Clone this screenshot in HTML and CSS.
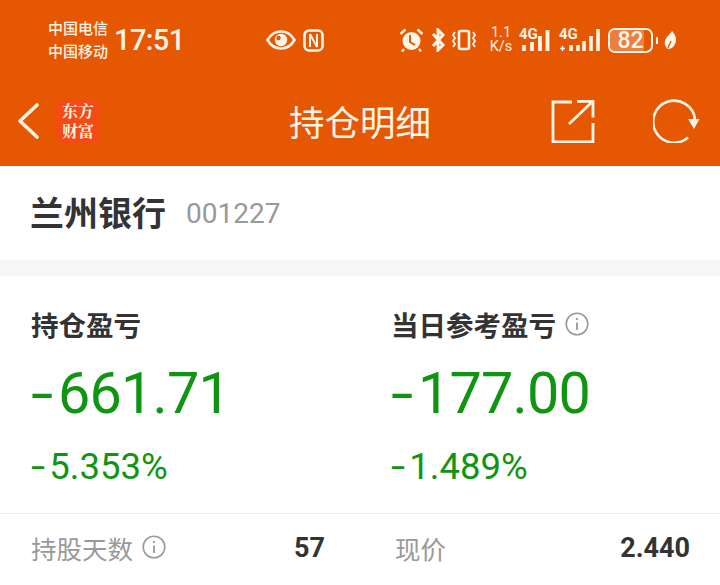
FILE: index.html
```html
<!DOCTYPE html>
<html lang="zh">
<head>
<meta charset="utf-8">
<title>持仓明细</title>
<link rel="stylesheet" href="styles.css">
</head>
<body>
<header class="top">
  <div class="status">
    <div class="carriers"><span>中国电信</span><span>中国移动</span></div>
    <span class="clock">17:51</span>
    <svg class="ic-eye" width="30" height="20" viewBox="0 0 30 20"><path d="M1.500 10C5 4 10 1.500 15 1.500S25 4 28.500 10C25 16 20 18.500 15 18.500S5 16 1.500 10z" fill="none" stroke="#fff4e8" stroke-width="2.600"/><circle cx="15" cy="10" r="6.200" fill="#fff4e8"/><circle cx="12.500" cy="8" r="2.200" fill="#e55700"/></svg>
    <svg class="ic-nfc" width="21" height="23" viewBox="0 0 21 23"><rect x="1.500" y="1.500" width="18" height="20" rx="4.500" fill="none" stroke="#fff4e8" stroke-width="2.600"/><path d="M7 5v13M14 5v13" fill="none" stroke="#fff4e8" stroke-width="2"/><path d="M7 5l7 13" fill="none" stroke="#fff4e8" stroke-width="2"/></svg>
    <span class="status-gap"></span>
    <svg class="ic-alarm" width="25" height="24" viewBox="0 0 25 24"><circle cx="12.500" cy="13" r="9" fill="#fff4e8"/><path d="M11 7v7l5 3" fill="none" stroke="#e55700" stroke-width="2"/><path d="M1.500 6l5-4.500M23.500 6l-5-4.500M5 21l-2 2.500M20 21l2 2.500" stroke="#fff4e8" stroke-width="2.400" fill="none"/></svg>
    <svg class="ic-bt" width="14" height="24" viewBox="0 0 14 24"><path d="M2 6l10 11-5 5V2l5 5L2 18" fill="none" stroke="#fff4e8" stroke-width="3"/></svg>
    <svg class="ic-vib" width="26" height="22" viewBox="0 0 26 22"><rect x="8" y="2" width="10" height="18" rx="2" fill="none" stroke="#fff4e8" stroke-width="2.600"/><path d="M4 3l-2 3 2 3-2 3 2 3-2 3M22 3l2 3-2 3 2 3-2 3 2 3" fill="none" stroke="#fff4e8" stroke-width="1.800"/></svg>
    <div class="speed"><span>1.1</span><span>K/s</span></div>
    <div class="signal">
      <span class="net">4G</span>
      <svg width="29" height="23" viewBox="0 0 29 23"><path d="M2 22v-6M10 22v-9M18 22V7M25.500 22V1" stroke="#fff4e8" stroke-width="3.800" fill="none"/></svg>
    </div>
    <div class="signal two">
      <span class="net">4G</span>
      <svg width="42" height="24" viewBox="0 0 42 24"><path d="M1 20.500h5M3.500 18v5" stroke="#fff4e8" stroke-width="1.400" fill="none"/><path d="M12 23v-6M19 23v-6M25 23v-10M32 23V8M39 23V1" stroke="#fff4e8" stroke-width="3.600" fill="none"/></svg>
    </div>
    <div class="battery"><span class="level"></span><span class="pct">82</span></div>
    <span class="nub"></span>
    <svg class="ic-leaf" width="13" height="20" viewBox="0 0 13 20"><path d="M8 1c4 4 5 9 3 13-1 3-4 5-7 5-2-1-4-5-3-8 1-4 5-7 7-10z" fill="#fff4e8"/><path d="M4 18l3-7" stroke="#e55700" stroke-width="1.200"/></svg>
  </div>
  <nav class="nav">
    <div class="nav-left">
      <svg class="back" width="24" height="38" viewBox="0 0 24 38"><path d="M21 3L4 19l17 16" fill="none" stroke="#fff4e8" stroke-width="3.600" stroke-linecap="round" stroke-linejoin="round"/></svg>
      <div class="logo"><span>东方</span><span>财富</span></div>
    </div>
    <h1 class="title">持仓明细</h1>
    <div class="nav-right">
      <svg width="44" height="44" viewBox="0 0 44 44"><path d="M21 3H2v40h40V24" fill="none" stroke="#fff4e8" stroke-width="2.800"/><path d="M18 25L40 4M26 2.400h16v16" fill="none" stroke="#fff4e8" stroke-width="2.800"/></svg>
      <svg width="48" height="44" viewBox="0 0 48 44"><path d="M35 38.500A21 21 0 1 1 42 20" fill="none" stroke="#fff4e8" stroke-width="2.600"/><path d="M35 20h11.500l-5.500 10z" fill="#fff4e8"/></svg>
    </div>
  </nav>
</header>
<section class="stock">
  <strong class="stock-name">兰州银行</strong>
  <span class="stock-code">001227</span>
</section>
<main class="panel">
  <div class="profit">
    <div class="profit-col">
      <h2 class="label">持仓盈亏</h2>
      <div class="amount"><span class="minus">-</span>661.71</div>
      <div class="ratio"><span class="minus">-</span>5.353%</div>
    </div>
    <div class="profit-col">
      <h2 class="label">当日参考盈亏 <svg class="info" width="24" height="24" viewBox="0 0 24 24"><circle cx="12" cy="12" r="10.800" fill="none" stroke="#9a9a9a" stroke-width="1.600"/><path d="M12 10.500V18M12 6v2" stroke="#9a9a9a" stroke-width="1.800" fill="none"/></svg></h2>
      <div class="amount"><span class="minus">-</span>177.00</div>
      <div class="ratio"><span class="minus">-</span>1.489%</div>
    </div>
  </div>
  <div class="facts">
    <div class="fact first">
      <span class="fact-name">持股天数 <svg class="info" width="24" height="24" viewBox="0 0 24 24"><circle cx="12" cy="12" r="10.800" fill="none" stroke="#9a9a9a" stroke-width="1.600"/><path d="M12 10.500V18M12 6v2" stroke="#9a9a9a" stroke-width="1.800" fill="none"/></svg></span>
      <span class="fact-value">57</span>
    </div>
    <div class="fact second">
      <span class="fact-name">现价</span>
      <span class="fact-value">2.440</span>
    </div>
  </div>
</main>
</body>
</html>
```

FILE: styles.css
```css
* { box-sizing: border-box; }
html, body { margin: 0; padding: 0; }
body {
  width: 720px;
  height: 585px;
  overflow: hidden;
  background: #fff;
  font-family: "Noto Sans CJK SC", Roboto, sans-serif;
}
.top { height: 166px; background: #e55700; color: #fff4e8; display: flex; flex-direction: column; }
.status { height: 80px; display: flex; align-items: center; padding-left: 48px; }
.carriers { display: flex; flex-direction: column; font-size: 15px; line-height: 23px; width: 66px; margin-top: -3px; font-weight: 500; }
.clock { font-family: Roboto, sans-serif; font-size: 29px; font-weight: 500; letter-spacing: -0.600px; width: 152px; }
.ic-eye { margin-right: 7px; }
.status-gap { width: 75px; }
.ic-alarm { margin-right: 7px; }
.ic-bt { margin-right: 6px; }
.ic-vib { margin-right: 12px; }
.speed { display: flex; flex-direction: column; align-items: center; font-family: Roboto, sans-serif; font-size: 14.500px; line-height: 14px; width: 24px; margin-right: 6px; }
.signal { position: relative; display: flex; align-items: flex-end; margin-right: 8px; height: 24px; padding-left: 3px; }
.signal.two { padding-left: 0; margin-right: 7px; }
.net { position: absolute; left: 0; top: -3px; font-family: Roboto, sans-serif; font-size: 15px; font-weight: 700; }
.battery { position: relative; width: 45px; height: 25px; border: 2px solid #fff4e8; border-radius: 7px; display: flex; align-items: center; justify-content: center; overflow: hidden; }
.level { position: absolute; left: 0; top: 0; bottom: 0; width: 82%; background: #ec7f3f; }
.pct { position: relative; font-family: Roboto, sans-serif; font-size: 23px; font-weight: 500; }
.nub { width: 2px; height: 7px; background: #fff4e8; margin: 0 6px 0 3px; }
.nav { flex: 1; display: flex; align-items: center; justify-content: space-between; position: relative; padding: 0 19px 4px 16px; }
.nav-left { display: flex; align-items: center; gap: 16px; }
.logo { width: 44px; height: 44px; background: #f44a14; border-radius: 7px; display: flex; flex-direction: column; align-items: center; justify-content: center; font-family: "Noto Serif CJK SC", "Noto Sans CJK SC", sans-serif; font-weight: 700; font-size: 16px; line-height: 20px; }
.title { position: absolute; left: 289px; top: 16px; margin: 0; font-size: 35.500px; line-height: 50px; font-weight: 400; }
.nav-right { display: flex; align-items: center; gap: 58px; }
.stock { height: 94px; display: flex; align-items: center; padding: 0 31px 0 30px; gap: 20px; }
.stock-name { font-size: 34px; font-weight: 700; color: #333; margin-top: -4px; }
.stock-code { font-family: Roboto, sans-serif; font-size: 28px; color: #999; }
.panel { border-top: 16px solid #f5f6f8; }
.profit { display: flex; padding: 28px 0 0 31px; height: 238px; border-bottom: 1px solid #f0f0f0; }
.profit-col { flex: none; width: 360px; }
.label { margin: 0; font-size: 27.500px; line-height: 40px; font-weight: 700; color: #333; display: flex; align-items: center; gap: 9px; }
.amount { font-family: Roboto, sans-serif; font-size: 57.500px; line-height: 70px; letter-spacing: -0.800px; color: #109513; margin-top: 15px; }
.ratio { font-family: Roboto, sans-serif; font-size: 36.500px; line-height: 44px; color: #109513; margin-top: 16px; }
.minus { display: inline-block; transform: scaleX(1.400); transform-origin: left center; }
.amount .minus { width: 0.470em; }
.ratio .minus { width: 0.500em; }
.facts { display: flex; padding-top: 13px; }
.fact { display: flex; align-items: center; justify-content: space-between; height: 40px; }
.first { width: 294px; margin-left: 31px; margin-right: 70px; }
.second { width: 295px; }
.fact-name { display: flex; align-items: center; gap: 9px; font-size: 25.500px; color: #999; }
.fact-value { font-family: Roboto, sans-serif; font-size: 27px; font-weight: 700; color: #333; margin-top: 2px; }
```
